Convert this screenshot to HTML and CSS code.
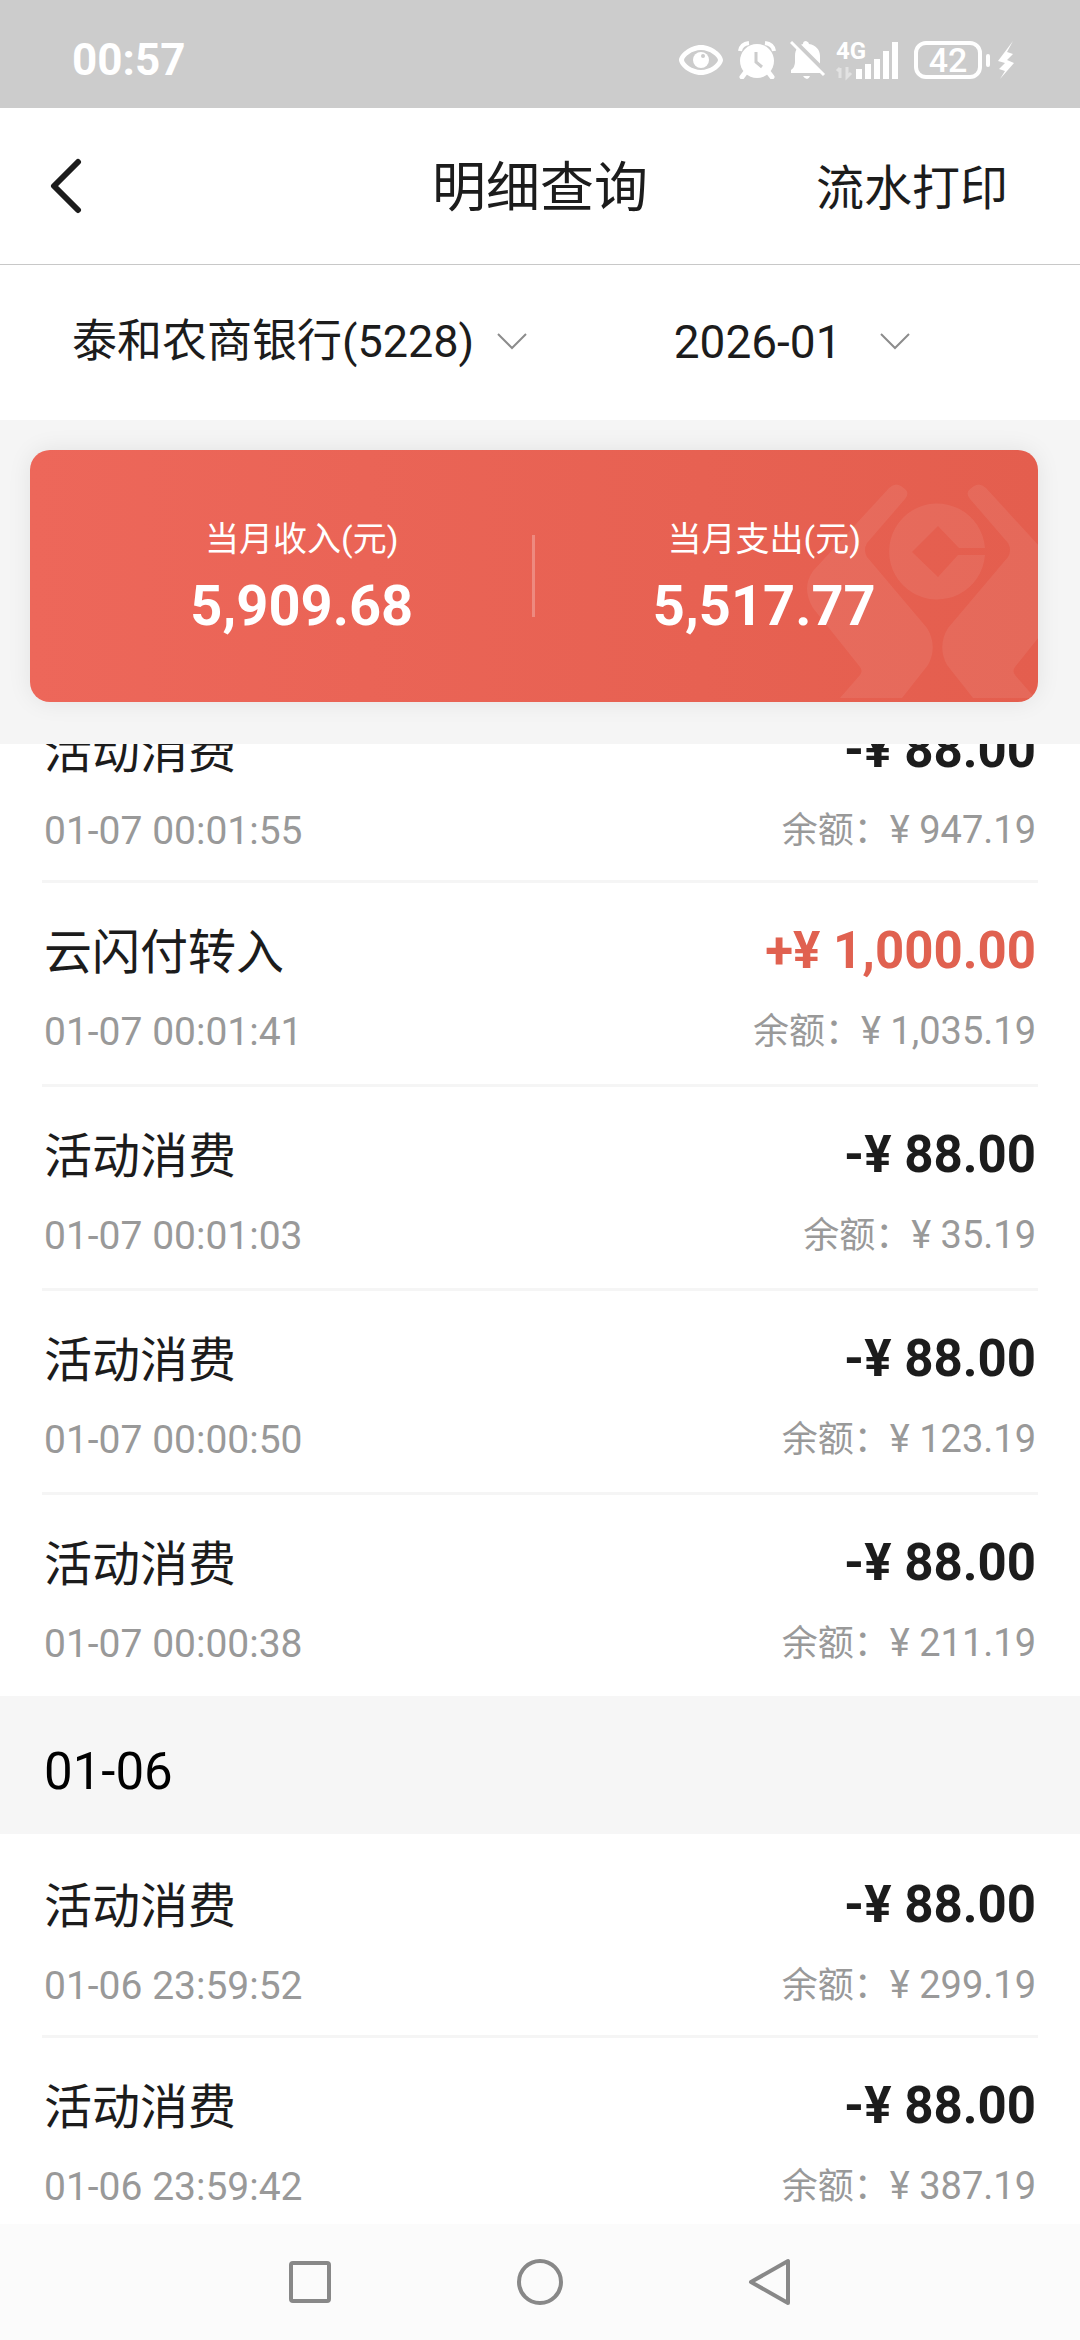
FILE: index.html
```html
<!DOCTYPE html>
<html lang="zh-CN">
<head>
<meta charset="utf-8">
<meta name="viewport" content="width=device-width">
<title>明细查询</title>
<link rel="stylesheet" href="styles.css">
</head>
<body>
<div class="status-bar">
  <span class="clock">00:57</span>
  <div class="status-icons">
    <svg width="46" height="32" viewBox="0 0 46 32"><path fill="#fff" fill-rule="evenodd" d="M23 1C35 1 45 11 45 16S35 31 23 31 1 21 1 16 11 1 23 1ZM23 6C14 6 6 13 6 16S14 26 23 26 40 19 40 16 32 6 23 6Z"/><circle cx="23" cy="16" r="8" fill="#fff"/><circle cx="25" cy="12" r="2" fill="#ccc"/></svg>
    <svg width="38" height="38" viewBox="0 0 38 38"><circle cx="19" cy="20" r="17" fill="#fff"/><path d="M2 10Q3 3 11 2M27 2Q35 3 36 10" stroke="#fff" stroke-width="4" fill="none"/><path d="M7 32L4 36M31 32L34 36" stroke="#fff" stroke-width="5" stroke-linecap="round"/><path d="M18 11V21L24 26" stroke="#ccc" stroke-width="3" fill="none"/></svg>
    <svg width="36" height="40" viewBox="0 0 36 40"><path fill="#fff" d="M16 1q3 1 3 3c7 1 11 6 11 12v10q0 4 4 7H1v-3q4-3 4-8V16C5 9 9 5 13 4q0-3 3-3Z"/><path fill="#fff" d="M13 36h7q-1 3-3 3t-4-3Z"/><path d="M4 1L37 34" stroke="#ccc" stroke-width="5"/><path d="M1 2L34 35" stroke="#fff" stroke-width="3"/></svg>
    <svg class="signal" width="64" height="40" viewBox="0 0 64 40"><text x="0" y="19" class="network">4G</text><path d="M4 28v10M1 31l3-3M11 27v10l4-4" stroke="#e2e2e2" stroke-width="3" fill="none"/><path fill="#fff" d="M20 29h6v10h-6zM29 24h6v15h-6zM38 19h6v20h-6zM47 11h6v28h-6zM56 2h6v37h-6z"/></svg>
    <div class="battery"><span class="battery-level">42</span></div>
    <svg width="28" height="38" viewBox="0 0 28 38"><rect x="0" y="13" width="4" height="13" rx="2" fill="#fff"/><path fill="#fff" d="M27 0L12 20l7 2-6 6 6 2-5 8 14-16-7-3 6-6-6-2Z"/></svg>
  </div>
</div>

<header class="title-bar">
  <button class="back" aria-label="返回"><svg width="32" height="56" viewBox="0 0 32 56"><path d="M28 4L4 28L28 52" fill="none" stroke="#1c1c1c" stroke-width="6" stroke-linecap="round" stroke-linejoin="round"/></svg></button>
  <h1 class="title">明细查询</h1>
  <button class="print">流水打印</button>
</header>

<form class="filters">
  <label class="filter">
    <select class="filter-select" aria-label="账户"><option>泰和农商银行(5228)</option></select>
    <svg width="30" height="18" viewBox="0 0 30 18"><path d="M1 1L15 15L29 1" fill="none" stroke="#8c8c8c" stroke-width="2"/></svg>
  </label>
  <label class="filter">
    <select class="filter-select month" aria-label="月份"><option>2026-01</option></select>
    <svg width="30" height="18" viewBox="0 0 30 18"><path d="M1 1L15 15L29 1" fill="none" stroke="#8c8c8c" stroke-width="2"/></svg>
  </label>
</form>

<section class="summary">
  <div class="card">
    <svg class="emblem" width="250" height="252" viewBox="0 0 250 252">
      <g fill="#fff" fill-opacity=".07">
        <path id="arm" d="M101 38Q107 32 113 36L117 39Q122 43 117 49L79 93Q75 100 79 107L139 178Q150 196 140 215L114 248H52L72 225Q75 221 72 217L25 158Q13 138 25 121Z"/>
        <use href="#arm" transform="matrix(-1 0 0 1 299 0)"/>
        <path d="M197 98A48 48 0 1 0 197 105H170L150 127L124 102L150 76L171 98Z"/>
      </g>
    </svg>
    <div class="total"><span class="total-label">当月收入(元)</span><strong class="total-value">5,909.68</strong></div>
    <div class="divider"></div>
    <div class="total"><span class="total-label">当月支出(元)</span><strong class="total-value">5,517.77</strong></div>
  </div>
</section>

<main class="records">
  <ul class="group">
    <li class="record"><span class="name">活动消费</span><span class="amount">-¥ 88.00</span><time class="time">01-07 00:01:55</time><span class="balance">余额：<span class="sum">¥ 947.19</span></span></li>
    <li class="record"><span class="name">云闪付转入</span><span class="amount income">+¥ 1,000.00</span><time class="time">01-07 00:01:41</time><span class="balance">余额：<span class="sum">¥ 1,035.19</span></span></li>
    <li class="record"><span class="name">活动消费</span><span class="amount">-¥ 88.00</span><time class="time">01-07 00:01:03</time><span class="balance">余额：<span class="sum">¥ 35.19</span></span></li>
    <li class="record"><span class="name">活动消费</span><span class="amount">-¥ 88.00</span><time class="time">01-07 00:00:50</time><span class="balance">余额：<span class="sum">¥ 123.19</span></span></li>
    <li class="record"><span class="name">活动消费</span><span class="amount">-¥ 88.00</span><time class="time">01-07 00:00:38</time><span class="balance">余额：<span class="sum">¥ 211.19</span></span></li>
  </ul>
  <h2 class="day">01-06</h2>
  <ul class="group">
    <li class="record"><span class="name">活动消费</span><span class="amount">-¥ 88.00</span><time class="time">01-06 23:59:52</time><span class="balance">余额：<span class="sum">¥ 299.19</span></span></li>
    <li class="record"><span class="name">活动消费</span><span class="amount">-¥ 88.00</span><time class="time">01-06 23:59:42</time><span class="balance">余额：<span class="sum">¥ 387.19</span></span></li>
  </ul>
</main>

<nav class="system-nav">
  <button class="nav-button" aria-label="最近任务"><svg width="48" height="48" viewBox="0 0 48 48"><rect x="5" y="5" width="38" height="38" rx="2"/></svg></button>
  <button class="nav-button" aria-label="主屏幕"><svg width="48" height="48" viewBox="0 0 48 48"><circle cx="24" cy="24" r="21"/></svg></button>
  <button class="nav-button" aria-label="返回上一级"><svg width="48" height="48" viewBox="0 0 48 48"><path d="M42 3V45L5 24Z"/></svg></button>
</nav>
</body>
</html>
```
FILE: styles.css
```css
* {
  box-sizing: border-box;
}

body {
  margin: 0;
  height: 100vh;
  display: flex;
  flex-direction: column;
  overflow: hidden;
  background: #fff;
  color: #1c1c1c;
  font-family: Roboto, "Noto Sans CJK SC", sans-serif;
}

button {
  padding: 0;
  border: 0;
  background: none;
  color: inherit;
  font: inherit;
}

svg {
  display: block;
}

/* Status bar */
.status-bar {
  flex: none;
  display: flex;
  justify-content: space-between;
  align-items: center;
  padding: 30px 66px 18px 72px;
  background: #ccc;
  color: #fff;
}

.clock {
  font-size: 44px;
  line-height: 60px;
  font-weight: 700;
}

.status-icons {
  display: flex;
  align-items: center;
  gap: 14px;
}

.signal {
  margin-left: -4px;
  overflow: visible;
}

.network {
  fill: #fff;
  font-size: 24px;
  font-weight: 700;
}

.battery {
  display: flex;
  justify-content: center;
  width: 68px;
  border: 4px solid #fff;
  border-radius: 12px;
  margin-right: -10px;
}

.battery-level {
  font-size: 34px;
  line-height: 30px;
  font-weight: 500;
}

/* Title bar */
.title-bar {
  flex: none;
  display: grid;
  grid-template-columns: 1fr auto 1fr;
  align-items: center;
  padding: 38px 72px 38px 50px;
  border-bottom: 1px solid #c8c8c8;
}

.title {
  margin: 0;
  padding: 6px 0 0 22px;
  font-size: 54px;
  line-height: 74px;
  font-weight: 400;
}

.print {
  justify-self: end;
  padding-top: 6px;
  font-size: 48px;
  line-height: 74px;
}

/* Account and month pickers */
.filters {
  flex: none;
  display: grid;
  grid-template-columns: 9fr 5fr;
  padding: 44px 72px 45px;
}

.filter {
  display: flex;
  align-items: center;
  gap: 22px;
}

.filter-select {
  appearance: none;
  padding: 0;
  border: 0;
  background: none;
  color: inherit;
  font-family: inherit;
  font-size: 45px;
  line-height: 66px;
}

.month {
  min-width: 184px;
  font-size: 46px;
}

/* Monthly totals */
.summary {
  flex: none;
  position: relative;
  z-index: 1;
  padding: 30px 42px 42px 30px;
  background: #f5f5f5;
}

.card {
  position: relative;
  display: grid;
  grid-template-columns: 1fr 3px 1fr;
  align-items: center;
  padding: 60px 44px 60px 42px;
  border-radius: 20px;
  background: linear-gradient(90deg, #ed675a, #e45e4e);
  box-shadow: 0 0 24px rgba(0, 0, 0, .08);
  color: #fff;
}

.emblem {
  position: absolute;
  right: 0;
  bottom: 0;
  border-radius: 0 0 20px 0;
}

.total {
  position: relative;
  display: flex;
  flex-direction: column;
  align-items: center;
  gap: 2px;
}

.total-label {
  font-size: 34px;
  line-height: 58px;
}

.total-value {
  font-size: 56px;
  line-height: 72px;
  font-weight: 700;
}

.divider {
  height: 82px;
  background: rgba(255, 255, 255, .25);
}

/* Records, scrolled part of a row under the totals */
.records {
  flex: 1;
  min-height: 0;
  margin-top: -65px;
  overflow: hidden;
}

.group {
  margin: 0;
  padding: 0 42px;
  list-style: none;
}

.record {
  display: grid;
  grid-template-columns: 1fr auto;
  grid-template-rows: 74px 60px;
  align-items: start;
  row-gap: 12px;
  padding: 36px 2px 19px;
}

.record + .record {
  padding: 33px 2px 22px;
  border-top: 3px solid #f5f5f5;
}

.name {
  font-size: 48px;
  line-height: 74px;
}

.amount {
  font-size: 51px;
  line-height: 70px;
  font-weight: 700;
  text-align: right;
}

.income {
  color: #e06150;
}

.time,
.balance {
  color: #999;
  line-height: 60px;
}

.time {
  font-size: 39px;
}

.balance {
  font-size: 36px;
  text-align: right;
}

.sum {
  font-size: 38px;
  line-height: 38px;
}

.day {
  margin: 0;
  padding: 46px 44px 32px;
  background: #f6f6f6;
  color: #000;
  font-size: 51px;
  line-height: 60px;
  font-weight: 400;
}

/* System navigation */
.system-nav {
  flex: none;
  display: grid;
  grid-template-columns: repeat(3, 1fr);
  padding: 34px 18%;
  background: #fbfbfb;
}

.nav-button {
  display: flex;
  justify-content: center;
  fill: none;
  stroke: #888;
  stroke-width: 4;
  stroke-linejoin: round;
}
```
